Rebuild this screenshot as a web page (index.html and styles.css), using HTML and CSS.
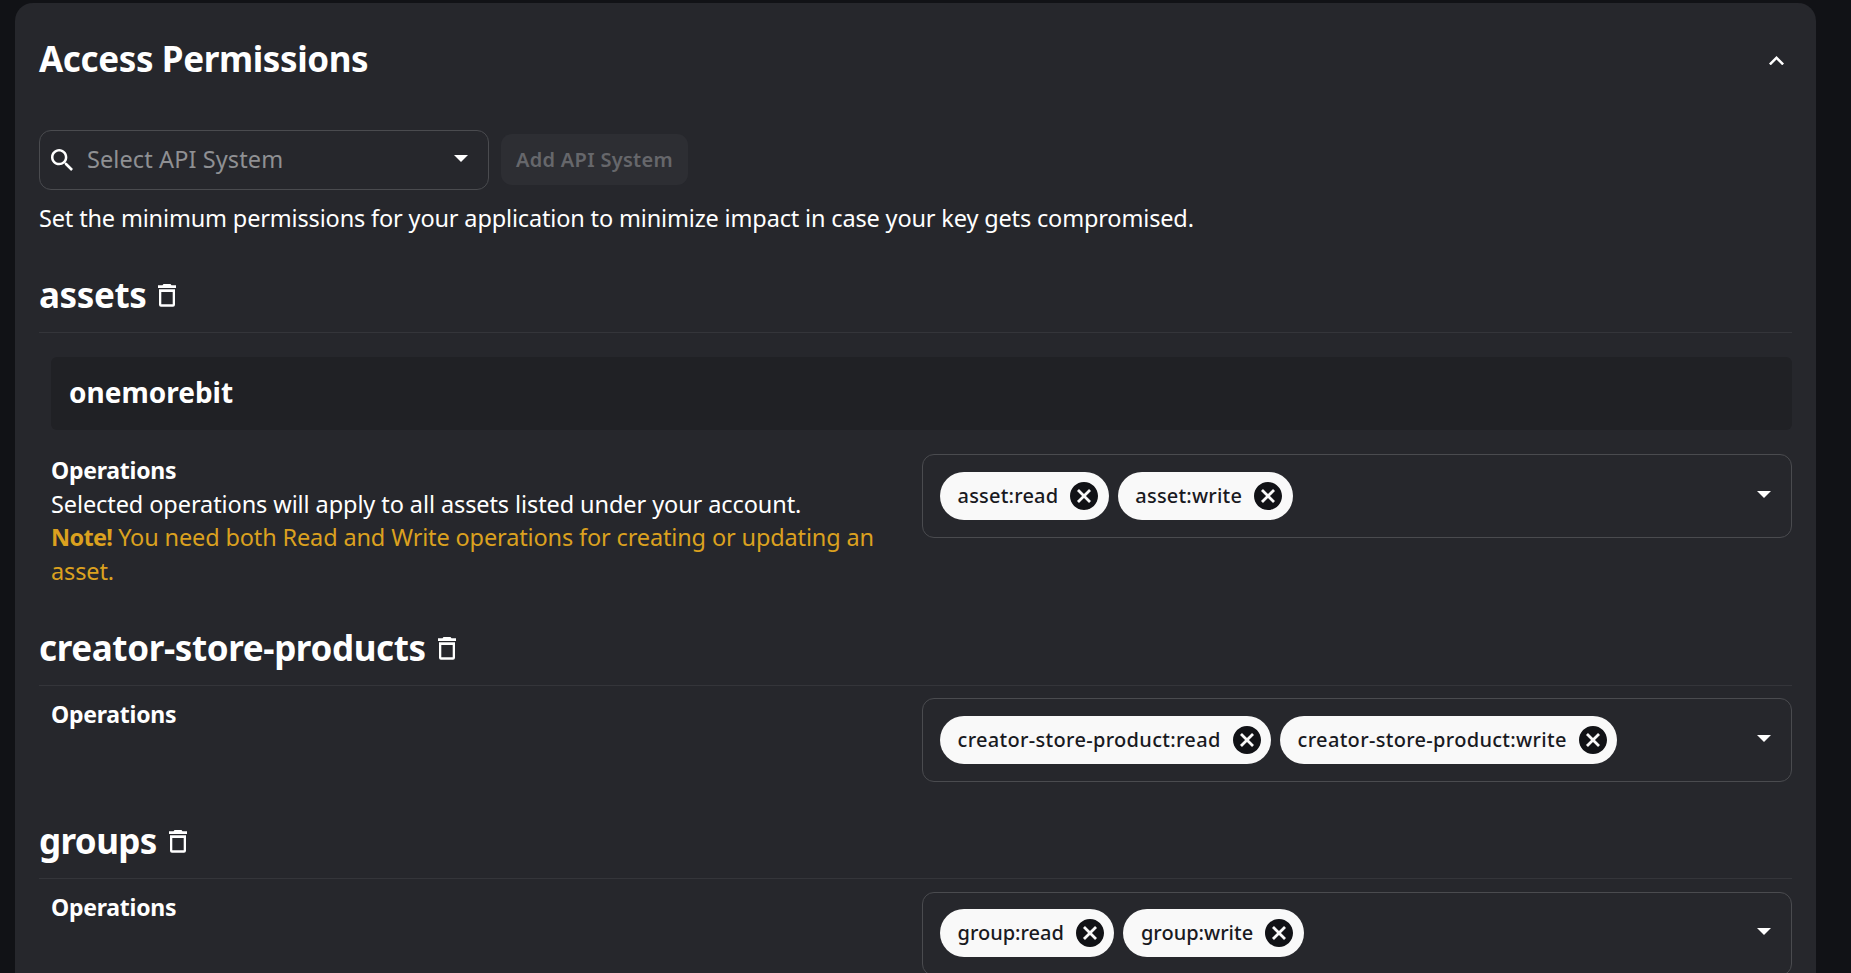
FILE: index.html
```
<!DOCTYPE html>
<html lang="en">
<head>
<meta charset="utf-8">
<title>Access Permissions</title>
<link rel="stylesheet" href="styles.css">
</head>
<body>
<svg class="defs" aria-hidden="true">
  <symbol id="trash" viewBox="0 0 18 23"><path d="M5.5 0h7l1 1.2H18v2.7H0V1.200h4.500zM1 5.200h16v15.600q0 2-2 2H3q-2 0-2-2zM3.300 8v12.200h11.400V8z" fill-rule="evenodd"/></symbol>
  <symbol id="cancel" viewBox="2 2 20 20"><path d="M12 2C6.47 2 2 6.47 2 12s4.47 10 10 10 10-4.47 10-10S17.53 2 12 2zm5 13.59L15.59 17 12 13.41 8.41 17 7 15.59 10.59 12 7 8.41 8.41 7 12 10.59 15.59 7 17 8.41 13.41 12 17 15.59z"/></symbol>
  <symbol id="caret" viewBox="0 0 14 7"><path d="M0 0h14L7 7z"/></symbol>
</svg>
<main class="card">
  <header class="card-header">
    <h1 class="title">Access Permissions</h1>
    <svg class="chevron" viewBox="6 8 12 7.41"><path d="M12 8l-6 6 1.41 1.41L12 10.83l4.59 4.58L18 14z"/></svg>
  </header>
  <div class="toolbar">
    <div class="search">
      <svg class="search-icon" viewBox="3 3 17.5 17.5"><path d="M15.5 14h-.79l-.28-.27C15.41 12.59 16 11.11 16 9.5 16 5.91 13.09 3 9.5 3S3 5.91 3 9.5 5.91 16 9.5 16c1.61 0 3.09-.59 4.23-1.57l.27.28v.79l5 4.99L20.49 19l-4.99-5zm-6 0C7.01 14 5 11.99 5 9.5S7.01 5 9.5 5 14 7.01 14 9.5 11.99 14 9.5 14z"/></svg>
      <span class="placeholder">Select API System</span>
      <svg class="caret"><use href="#caret"/></svg>
    </div>
    <button class="add" disabled>Add API System</button>
  </div>
  <p class="hint">Set the minimum permissions for your application to minimize impact in case your key gets compromised.</p>

  <section class="system assets">
    <div class="system-head"><h2 class="name">assets</h2><svg class="trash"><use href="#trash"/></svg></div>
    <div class="owner">onemorebit</div>
    <div class="row">
      <div class="info">
        <h3 class="label">Operations</h3>
        <p class="text">Selected operations will apply to all assets listed under your account.</p>
        <p class="text note"><b class="lead">Note!</b> You need both Read and Write operations for creating or updating an asset.</p>
      </div>
      <div class="select">
        <div class="chip">asset:read<svg class="cancel"><use href="#cancel"/></svg></div>
        <div class="chip">asset:write<svg class="cancel"><use href="#cancel"/></svg></div>
        <svg class="caret"><use href="#caret"/></svg>
      </div>
    </div>
  </section>

  <section class="system products">
    <div class="system-head"><h2 class="name">creator-store-products</h2><svg class="trash"><use href="#trash"/></svg></div>
    <div class="row">
      <div class="info"><h3 class="label">Operations</h3></div>
      <div class="select">
        <div class="chip">creator-store-product:read<svg class="cancel"><use href="#cancel"/></svg></div>
        <div class="chip">creator-store-product:write<svg class="cancel"><use href="#cancel"/></svg></div>
        <svg class="caret"><use href="#caret"/></svg>
      </div>
    </div>
  </section>

  <section class="system groups">
    <div class="system-head"><h2 class="name">groups</h2><svg class="trash"><use href="#trash"/></svg></div>
    <div class="row">
      <div class="info"><h3 class="label">Operations</h3></div>
      <div class="select">
        <div class="chip">group:read<svg class="cancel"><use href="#cancel"/></svg></div>
        <div class="chip">group:write<svg class="cancel"><use href="#cancel"/></svg></div>
        <svg class="caret"><use href="#caret"/></svg>
      </div>
    </div>
  </section>
</main>
</body>
</html>
```

FILE: styles.css
```
* { box-sizing: border-box; margin: 0; }
html, body { height: 100%; overflow: hidden; }
body {
  background: #111216;
  color: #fff;
  font: 400 23.5px/33.6px "Noto Sans", sans-serif;
  padding: 3px 35px 0 15px;
}
svg { fill: #fff; flex: none; display: block; }
.defs { display: none; }
.card {
  height: 100%;
  overflow: hidden;
  padding: 0 24px;
  background: #26272c;
  border-radius: 18px 18px 0 0;
}
.card-header {
  height: 110px;
  padding-right: 8px;
  display: flex;
  align-items: center;
  justify-content: space-between;
}
.title, .name { font-size: 35px; font-weight: 700; line-height: 44px; letter-spacing: -.38px; padding-top: 2px; }
.chevron { width: 15px; height: 9.3px; margin-top: 5px; }

.toolbar { display: flex; align-items: flex-start; gap: 12px; margin-top: 17px; }
.search {
  width: 450px;
  height: 60px;
  padding: 0 20px 0 11px;
  display: flex;
  align-items: center;
  border: 1px solid #4a4b4f;
  border-radius: 12px;
}
.search-icon { width: 22px; height: 22px; }
.placeholder { margin-left: 14px; color: #8f9093; letter-spacing: .1px; }
.caret { width: 14px; height: 7px; margin-left: auto; margin-bottom: 4px; }
.add {
  width: 187px;
  height: 51px;
  margin-top: 4px;
  padding: 0;
  border: 0;
  border-radius: 11px;
  background: #2d2e33;
  color: #66676b;
  font: 600 20px/30px "Noto Sans", sans-serif;
  letter-spacing: .3px;
}
.hint { margin-top: 12px; height: 33px; letter-spacing: -.155px; white-space: nowrap; }

.system-head {
  height: 77px;
  display: flex;
  align-items: center;
  gap: 12px;
  border-bottom: 1px solid #34353a;
}
.trash { width: 18px; height: 23px; margin-top: 3px; }
.groups .trash, .products .trash { margin-top: 2px; }
.groups .name { letter-spacing: -.6px; }
.assets { margin-top: 21px; height: 353px; }
.products { height: 193px; }
.owner {
  height: 73px;
  margin: 24px 0 24px 12px;
  padding: 0 18px 1px;
  display: flex;
  align-items: center;
  background: #202125;
  border-radius: 6px;
  font-size: 28px;
  font-weight: 700;
}
.row {
  display: grid;
  grid-template-columns: 871px 870px;
  align-items: start;
  margin: 12px 0 0 12px;
}
.info { padding-right: 24px; }
.label { font-size: 23px; font-weight: 700; line-height: 33.6px; letter-spacing: -.25px; }
.text { letter-spacing: -.09px; }
.note { letter-spacing: -.14px; color: #dba11f; }
.lead { letter-spacing: -.7px; }
.select {
  height: 84px;
  padding: 0 20px 0 17px;
  display: flex;
  align-items: center;
  gap: 9px;
  border: 1px solid #4a4b4f;
  border-radius: 12px;
}
.chip {
  height: 48px;
  padding: 0 10.5px 0 17.5px;
  display: flex;
  align-items: center;
  gap: 12px;
  border-radius: 24px;
  background: #f9f9f9;
  color: #191a1f;
  font-size: 20px;
  font-weight: 500;
  letter-spacing: .2px;
  white-space: nowrap;
}
.products .chip { letter-spacing: .31px; }
.groups .chip { letter-spacing: 0; }
.cancel { width: 28px; height: 28px; fill: #111216; }
.groups .select { margin-top: 1px; padding-bottom: 2px; }
```
